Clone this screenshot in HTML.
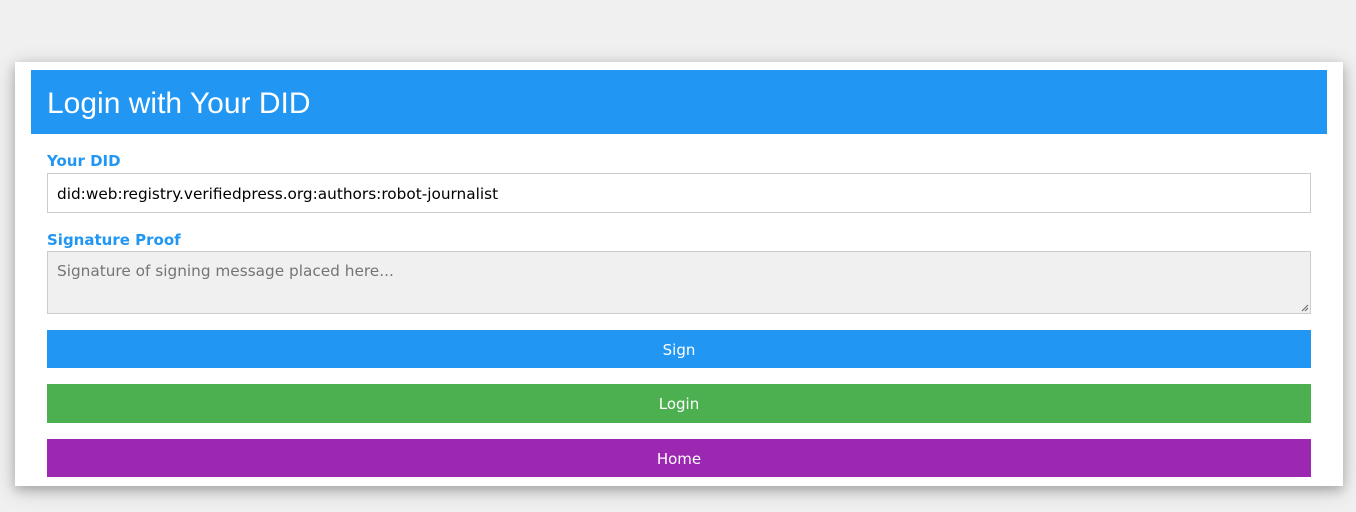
<!DOCTYPE html>
<html><head><style>
body{margin:0;background:#f0f0f0;font-family:"DejaVu Sans",sans-serif;width:1356px;height:512px;overflow:hidden;position:relative}
.card{position:absolute;left:15px;top:62px;width:1328px;height:424px;background:#fff;box-shadow:0 4px 10px rgba(0,0,0,.2),0 4px 20px rgba(0,0,0,.19)}
.hd{position:absolute;left:16px;top:8px;width:1296px;height:64px;background:#2196f3;color:#fff;font-family:"Liberation Sans",sans-serif;font-size:30px;line-height:68px;box-sizing:border-box;padding-left:16px}
.lb{position:absolute;left:32px;color:#2196f3;font-weight:bold;font-size:15px}
.in{position:absolute;left:32px;width:1264px;box-sizing:border-box;border:1px solid #ccc;font-size:15.3px;padding-left:9px}
.bt{position:absolute;left:32px;width:1264px;color:#fff;text-align:center;font-size:15px}
</style></head><body>
<div class="card">
<div class="hd">Login with Your DID</div>
<div class="lb" style="top:90px">Your DID</div>
<div class="in" style="top:111px;height:40px;line-height:40px;color:#000">did:web:registry.verifiedpress.org:authors:robot-journalist</div>
<div class="lb" style="top:169px">Signature Proof</div>
<div class="in" style="top:189px;height:63px;background:#f0f0f0;color:#757575;padding-top:10px">Signature of signing message placed here...
<svg style="position:absolute;right:1px;bottom:1px" width="8" height="8"><path d="M1 7L7 1M4 7L7 4" stroke="#666" stroke-width="1"/></svg></div>
<div class="bt" style="top:268px;height:38px;line-height:40px;background:#2196f3">Sign</div>
<div class="bt" style="top:322px;height:39px;line-height:40px;background:#4caf50">Login</div>
<div class="bt" style="top:377px;height:38px;line-height:40px;background:#9c27b0">Home</div>
</div>
</body></html>
